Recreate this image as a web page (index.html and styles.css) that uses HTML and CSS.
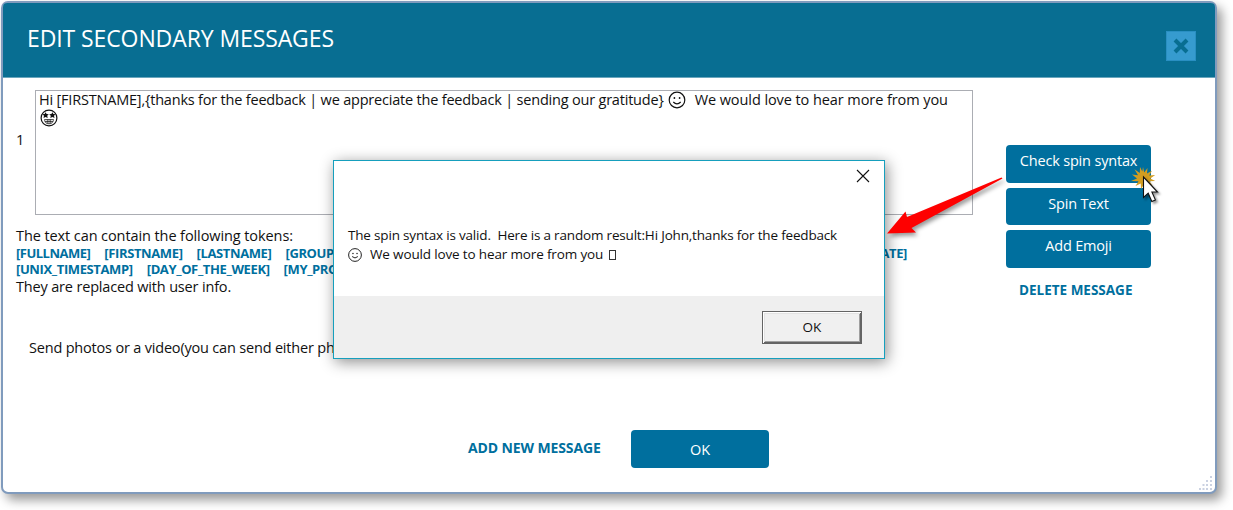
FILE: index.html
```html
<!DOCTYPE html>
<html lang="en">
<head>
<meta charset="utf-8">
<title>Edit secondary messages</title>
<link rel="stylesheet" href="styles.css">
</head>
<body>
<main class="window">
  <header class="header">
    <h1 class="title">EDIT SECONDARY MESSAGES</h1>
    <button class="close" aria-label="Close">
      <svg width="18" height="18" viewBox="0 0 18 18"><path d="M3 3 15 15M15 3 3 15"/></svg>
    </button>
  </header>
  <div class="body">
    <section class="editor">
      <div class="row">
        <span class="index">1</span>
        <div class="textarea">
          <div class="line"><span class="t-msg">Hi [FIRSTNAME],{thanks for the feedback | we appreciate the feedback | sending our gratitude}</span><svg class="smile" width="18" height="18" viewBox="0 0 18 18"><circle cx="9" cy="9" r="7.8"/><path d="M5.3 11q3.7 3.6 7.4 0"/><circle class="dot" cx="6.4" cy="7" r=".9"/><circle class="dot" cx="11.6" cy="7" r=".9"/></svg><span class="t-love">We would love to hear more from you</span></div>
          <svg class="star" width="18" height="18" viewBox="0 0 18 18"><circle cx="9" cy="9" r="7.9"/><path class="dot" d="m5.6 3.2 1 1.9 2.200.2-1.600 1.500.5 2.200-2.100-1-2.100 1 .5-2.200-1.600-1.500 2.200-.2zM12.400 3.200l1 1.900 2.200.2L14 6.800l.5 2.200-2.100-1-2.100 1 .5-2.200-1.600-1.500 2.200-.2z"/><path class="teeth" d="M4.500 10.500h9q-.3 4.300-4.500 4.300t-4.500-4.300zM5 12.500h8M7.300 10.500v4M9 10.500v4.300M10.700 10.500v4"/></svg>
        </div>
      </div>
      <div class="help">
        <p class="t-intro">The text can contain the following tokens:</p>
        <div class="tokens"><div class="tokenrow"><b class="k1">[FULLNAME]</b><b class="k2">[FIRSTNAME]</b><b class="k3">[LASTNAME]</b><b class="k4">[GROUP</b><b class="k5">ATE]</b></div>
        <div class="tokenrow"><b class="k6">[UNIX_TIMESTAMP]</b><b class="k7">[DAY_OF_THE_WEEK]</b><b class="k8">[MY_PRO</b></div></div>
        <p class="t-info">They are replaced with user info.</p>
      </div>
      <p class="media">Send photos or a video(you can send either ph</p>
    </section>
    <aside class="actions">
      <button class="btn b1"><span>Check spin syntax</span></button>
      <button class="btn b2"><span>Spin Text</span></button>
      <button class="btn b3"><span>Add Emoji</span></button>
      <a class="link t-del">DELETE MESSAGE</a>
    </aside>
  </div>
  <footer class="footer">
    <a class="link t-add">ADD NEW MESSAGE</a>
    <button class="btn ok">OK</button>
  </footer>
  <svg class="grip" width="14" height="14" viewBox="0 0 14 14"><path d="M11 0h2v2h-2zM11 4h2v2h-2zM7 4h2v2H7zM11 8h2v2h-2zM7 8h2v2H7zM3.500 8h2v2h-2zM11 12h2v2h-2zM7 12h2v2H7zM3.500 12h2v2h-2zM0 12h2v2H0z"/></svg>
</main>
<div class="alert" role="dialog">
  <div class="alert-top">
    <svg class="x" width="14" height="14" viewBox="0 0 14 14"><path d="M1 1 13 13M13 1 1 13"/></svg>
    <p class="t-a1">The spin syntax is valid.&nbsp; Here is a random result:Hi John,thanks for the feedback</p>
    <p class="second"><svg class="smile" width="14" height="14" viewBox="0 0 18 18"><circle cx="9" cy="9" r="8.200"/><path d="M5.300 11q3.700 3.600 7.400 0"/><circle class="dot" cx="6.400" cy="7" r=".9"/><circle class="dot" cx="11.600" cy="7" r=".9"/></svg><span class="t-a2">We would love to hear more from you</span><i class="tofu"></i></p>
  </div>
  <div class="alert-foot"><button class="classic">OK</button></div>
</div>
<svg class="pointer" width="290" height="110" viewBox="880 140 290 110">
  <path class="arrow" d="M1001.500 177.500 907 217 905.500 211.500 887 233.500 916 232.500 911.500 228 1002.500 178.500z"/>
  <path class="burst" d="M1143 167l1.200 5.500 3.300-4.500-.5 5.500 5-2.700-2.800 4.700 6-.5-5 3.500 5 2.500-5.600.3 3 4.700-5.100-2.500-.5 5.500-3-4.500-3 4.500-.3-5.500-5.200 2.500 3-4.700-7.500-.3 6-2.500-5-4 6 .8-3.500-6 5.300 3.700.2-6 2.300 4.500z"/>
  <path class="cursor" d="M1143.500 177v20.500l4.700-4.300 3.600 8.300 3.600-1.600-3.500-7.900h5.600z"/>
</svg>
</body>
</html>
```
FILE: styles.css
```css
* { box-sizing: border-box; }
body { margin: 0; width: 1233px; height: 510px; overflow: hidden; background: #fff; font-family: "Open Sans", "Noto Sans", sans-serif; font-size: 14.5px; color: #111; }
p, h1 { margin: 0; font-weight: 400; }
button { font: inherit; padding: 0; border: 0; }
p, span, a, b, h1 { white-space: nowrap; }
.window { position: relative; display: flex; flex-direction: column; width: 1216px; height: 493px; margin: 1px 0 0 1px; border: 2px solid #809bbd; border-radius: 7px; background: #fff; box-shadow: 5px 6px 11px rgba(0,0,0,.4); }
.header { display: flex; justify-content: space-between; height: 75px; padding: 0 19px 0 24px; background: #086e92; border-bottom: 1px solid #6aa6bd; border-radius: 4px 4px 0 0; }
.title { color: #fff; font-size: 23px; line-height: 30px; margin-top: 20px; letter-spacing: -.1px; }
.close { width: 30px; height: 30px; margin-top: 28px; background: #369bcf; border: 1px solid #298fc2; display: grid; place-items: center; }
.close svg { stroke: #086e92; stroke-width: 4; }
.body { display: flex; height: 324px; padding: 12px 0 0 13px; }
.editor { width: 957px; }
.row { display: flex; align-items: flex-start; }
.index { width: 19px; line-height: 20px; margin-top: 40px; }
.textarea { width: 938px; height: 125px; border: 1px solid #abadb3; padding: 0 3px; line-height: 18px; }
.line { display: flex; height: 18px; }
.t-msg { letter-spacing: -.2px; }
.t-love { letter-spacing: -.08px; }
.smile { fill: none; stroke: #111; stroke-width: 1.2; }
.line .smile { margin: 0 9px 0 4px; }
.dot { fill: #111; stroke: none; }
.star { display: block; fill: none; stroke: #111; stroke-width: 1.2; margin-left: 1px; }
.teeth { stroke-width: .7; }
.help { margin-top: 12px; line-height: 18px; }
.t-intro { letter-spacing: -.09px; }
.t-info { letter-spacing: -.17px; margin-top: 1px; }
.tokens { color: #006f9e; font-size: 13px; line-height: 16px; letter-spacing: -.38px; }
.tokenrow { display: flex; }
.tokenrow b { margin-right: 14px; }
.tokenrow .k1 { letter-spacing: -.5px; }
.tokenrow .k4 { width: 595px; margin: 0; }
.media { margin: 43px 0 0 13px; line-height: 18px; letter-spacing: -.19px; }
.actions { display: flex; flex-direction: column; gap: 5px; width: 145px; margin: 55px 0 0 33px; }
.btn { background: #006f9e; color: #fff; border-radius: 4px; height: 37px; line-height: 19px; padding-bottom: 7px; letter-spacing: -.18px; }
.b1, .b3 { height: 38px; padding-bottom: 8px; }
.link { color: #006f9e; font-weight: 700; font-size: 13.5px; line-height: 18px; }
.t-del { margin: 8px 0 0 13px; }
.footer { display: flex; padding: 28px 0 0 465px; }
.t-add { width: 163px; margin-top: 9px; font-size: 14px; letter-spacing: -.12px; }
.ok { width: 138px; height: 38px; padding: 0; }
.grip { position: absolute; right: 2px; bottom: 2px; fill: #cbd2e2; }
.alert { position: absolute; left: 333px; top: 160px; width: 552px; height: 199px; border: 1px solid #169fbd; background: #fff; box-shadow: 2px 3px 14px rgba(0,0,0,.45); font-size: 13.5px; color: #111; }
.alert-top { display: flex; flex-direction: column; height: 135px; padding: 8px 14px; line-height: 19px; }
.t-a1 { letter-spacing: -.18px; }
.t-a2 { letter-spacing: -.15px; }
.x { align-self: flex-end; stroke: #111; stroke-width: 1.1; margin: 0 0 43px; }
.second { display: flex; align-items: center; }
.second .smile { margin-right: 8px; }
.tofu { width: 7px; height: 10px; border: 1px solid #333; margin: 0 0 0 6px; }
.alert-foot { display: flex; justify-content: flex-end; height: 62px; padding: 15px 22px; background: #efefef; }
.classic { width: 100px; height: 33px; padding-bottom: 2px; background: #f0f0f0; color: #111; border: 1px solid #646464; box-shadow: inset 1px 1px #fff, inset -1px -1px #646464, inset 2px 2px #e3e3e3, inset -2px -2px #a0a0a0; }
.pointer { position: absolute; left: 880px; top: 140px; }
.arrow { fill: #fe0000; filter: drop-shadow(2px 3px 2px rgba(0,0,0,.4)); }
.burst { fill: #d29d20; }
.cursor { fill: #fff; stroke: #111; stroke-width: 1.1; filter: drop-shadow(2px 2px 1px rgba(0,0,0,.4)); }
```
